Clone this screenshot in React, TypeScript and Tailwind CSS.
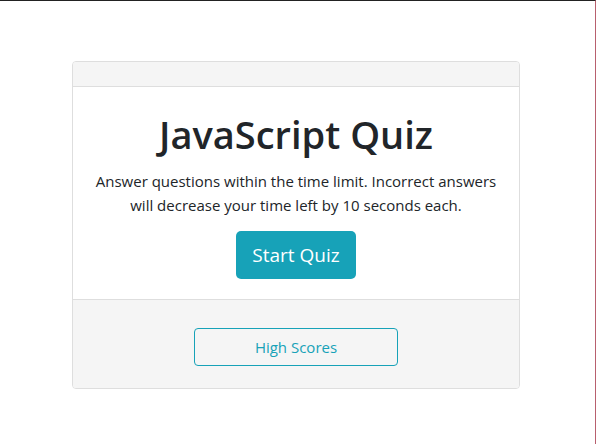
export default function App() {
  return (
    <div
      className="h-[444px] w-[596px] overflow-hidden border-t border-r border-t-[#222222] border-r-[#b8606e] bg-white text-[#212529]"
      style={{ fontFamily: '"Open Sans", "Noto Sans", sans-serif' }}
    >
      <div className="flex justify-center pt-[60px] pr-[3px]">
        {/* Card */}
        <div className="w-[448px] overflow-hidden rounded-[4px] border border-[#dedede]">
          <div className="h-[25px] border-b border-[#dedede] bg-[#f5f5f5]" />

          <div className="flex flex-col items-center bg-white px-5 pt-[23px] pb-5 text-center">
            <h1 className="text-[38px] leading-[48px] font-semibold">JavaScript Quiz</h1>
            <p className="mt-[11px] text-[15px] leading-6">
              Answer questions within the time limit. Incorrect answers
              <br />
              will decrease your time left by 10 seconds each.
            </p>
            <button className="mt-[14px] h-[48px] w-[120px] rounded-[5px] bg-[#17a2b8] text-[19px] text-white">
              Start Quiz
            </button>
          </div>

          <div className="flex justify-center border-t border-[#dedede] bg-[#f5f5f5] pt-[28px] pb-[22px]">
            <button className="h-[38px] w-[204px] rounded-[4px] border border-[#17a2b8] text-[15px] text-[#17a2b8]">
              High Scores
            </button>
          </div>
        </div>
      </div>
    </div>
  );
}
